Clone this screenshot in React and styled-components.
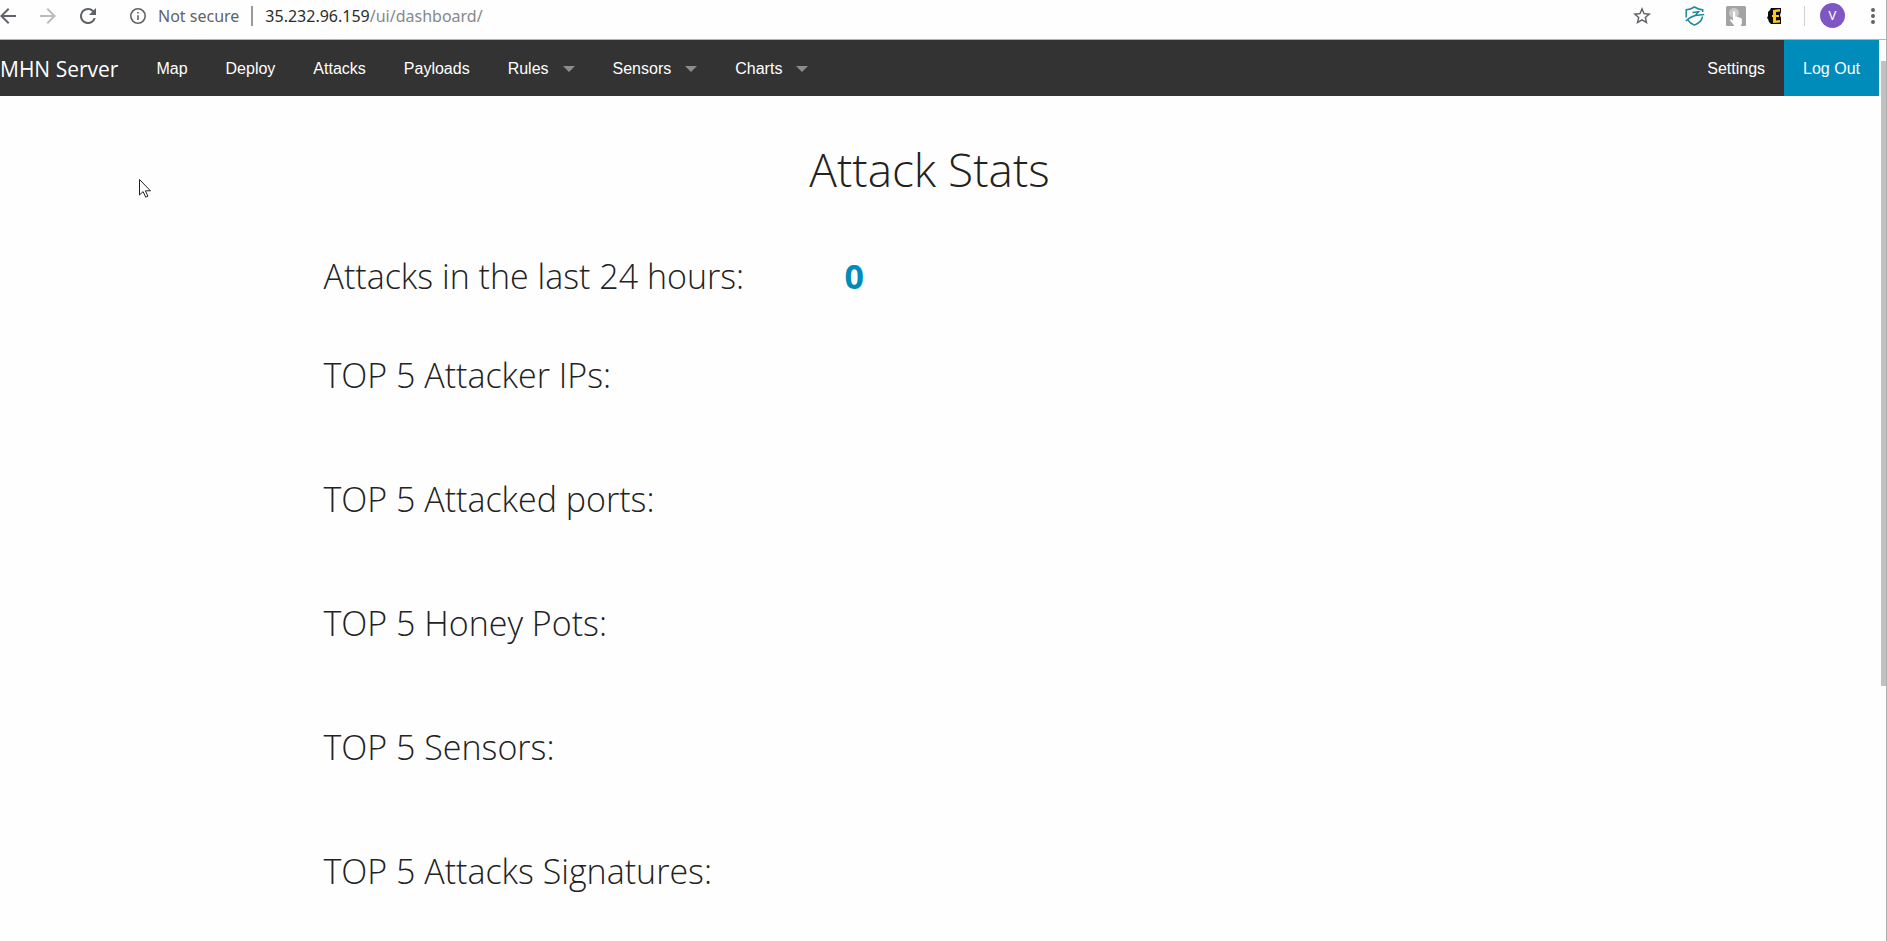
import React from "react";
import styled, { createGlobalStyle } from "styled-components";

const GlobalStyle = createGlobalStyle`
  * { box-sizing: border-box; }
  body {
    margin: 0;
    background: #fefefe;
    color: #222;
    font-family: "Open Sans", "Liberation Sans", sans-serif;
  }
`;

const Page = styled.div`
  min-height: 100vh;
  display: flex;
  flex-direction: column;
  border-right: 1px solid #b0b0b0;
  position: relative;
`;

const BrowserBar = styled.header`
  height: 40px;
  padding-bottom: 8px;
  display: flex;
  align-items: center;
  justify-content: space-between;
  border-bottom: 1px solid #b4b4b4;
  color: #5f6368;
`;

const BarGroup = styled.div`
  display: flex;
  align-items: center;
  gap: ${(p) => p.$gap}px;
`;

const IconButton = styled.button`
  display: flex;
  padding: 0;
  border: 0;
  background: none;
  color: ${(p) => (p.$muted ? "#b9bbbd" : "#5f6368")};
`;

const Address = styled.div`
  display: flex;
  align-items: center;
  gap: 12px;
  padding-left: 10px;
  font-family: "Noto Sans", "Open Sans", sans-serif;
  font-size: 16px;
  line-height: 24px;
`;

const Divider = styled.span`
  width: ${(p) => p.$width}px;
  height: 20px;
  background: ${(p) => p.$color};
`;

const Url = styled.span`
  color: #85888b;
`;

const Host = styled.span`
  color: #2b2c2f;
`;

const BarEnd = styled(BarGroup)`
  padding-right: 5px;
`;

const Extensions = styled(BarGroup)`
  padding: 0 7px 0 19px;
`;

const Avatar = styled.button`
  width: 25px;
  height: 25px;
  padding: 0;
  border: 0;
  border-radius: 50%;
  background: #7e57c2;
  color: #fff;
  font-family: Roboto, sans-serif;
  font-size: 13px;
  line-height: 25px;
  text-align: center;
`;

const KebabButton = styled(IconButton)`
  margin-left: 5px;
`;

const Viewport = styled.div`
  flex: 1;
  display: flex;
`;

const Site = styled.div`
  flex: 1;
  min-width: 0;
`;

const NavBar = styled.nav`
  height: 56px;
  display: flex;
  background: #333;
`;

const Brand = styled.a`
  padding-right: 19px;
  color: #fff;
  font-size: 21px;
  line-height: 58px;
  text-decoration: none;
  white-space: nowrap;
`;

const NavList = styled.ul`
  display: flex;
  margin: 0;
  margin-left: ${(p) => (p.$end ? "auto" : 0)};
  padding: 0;
  list-style: none;
`;

const NavLink = styled.a`
  display: flex;
  align-items: center;
  gap: 14px;
  height: 56px;
  padding: 2px 19px 0;
  background: ${(p) => (p.$primary ? "#008cba" : "transparent")};
  color: #fff;
  font-family: "Liberation Sans", Arial, sans-serif;
  font-size: 16px;
  text-decoration: none;
  white-space: nowrap;
`;

const Caret = styled.span`
  border: 6px solid transparent;
  border-top-color: #8c8c8c;
  border-bottom: 0;
`;

const Content = styled.main`
  max-width: 1232px;
  margin: 0 auto;
  padding: 41px 20px 20px 0;
`;

const Title = styled.h1`
  margin: 0 0 51px;
  font-size: 46px;
  font-weight: 300;
  line-height: 64px;
  text-align: center;
`;

const StatRow = styled.section`
  display: grid;
  grid-template-columns: 5fr 7fr;
  padding-bottom: ${(p) => (p.$compact ? 51 : 76)}px;

  &:last-child {
    padding-bottom: 0;
  }
`;

const StatLabel = styled.h3`
  margin: 0;
  font-size: 34px;
  font-weight: 300;
  line-height: 48px;
  white-space: nowrap;
`;

const StatValue = styled.strong`
  padding-left: 16px;
  color: #008cba;
  font-size: 34px;
  font-weight: 700;
  line-height: 48px;
`;

const ScrollTrack = styled.div`
  width: 7px;
  padding: 21px 0 0 2px;
  display: flex;
  flex-direction: column;
`;

const ScrollThumb = styled.div`
  flex: 0 0 71%;
  background: #c1c1c1;
`;

const Pointer = styled.svg`
  position: absolute;
  left: 138px;
  top: 178px;
`;

const Icon = ({ size = 16, box = "4 4 16 16", children }) => (
  <svg width={size} height={size} viewBox={box} fill="currentColor" aria-hidden="true">
    {children}
  </svg>
);

const ShieldIcon = () => (
  <svg width="20" height="20" viewBox="0 0 20 20" fill="none" stroke="#1b87a3" strokeWidth="1.5" aria-hidden="true">
    <path d="M1.200 11.500V3.800C4.600 3.600 7 2.500 9.500 1c2.500 1.500 5 2.600 8.200 2.800V6" />
    <path d="M17.600 10.500c-.8 4-3.600 6.800-8.100 8.600-3-1.200-5.200-2.800-6.600-5" />
    <path d="M.8 15c3-3 6-4.800 9.600-5.600l8.800-.8M7.500 6.600l6-.8-3.200 3.600" strokeWidth="1.500" />
  </svg>
);

const TouchIcon = () => (
  <svg width="20" height="20" viewBox="0 0 20 20" aria-hidden="true">
    <rect width="20" height="20" rx="1.500" fill="#a3a3a3" />
    <circle cx="8" cy="7" r="5" fill="#c9c9c9" />
    <path d="M7 6.500c0-1.600 2.300-1.600 2.300 0V11c.7-.7 2-.5 2.200.3.700-.5 1.900-.3 2.100.6.900-.3 2.300.1 2.300 1.500V17l-1 3H8.600L4.300 14.800c-.8-1.300.6-2.200 1.500-1.300L7 14.600z" fill="#fff" />
  </svg>
);

const BadgeIcon = () => (
  <svg width="15" height="18" viewBox="0 0 15 18" aria-hidden="true">
    <path d="M4 1h10v4l-1 3 1 3v6H4L2 15l-1-3-1-1 1-2V5l2-2z" fill="#0b0a08" />
    <path d="M6 3l7-1v2.500l-4 .5v3h3v2H9v3.500l4-.5v2.500l-7 .5v-6H5v-2h1z" fill="#f8c81c" />
  </svg>
);

const navItems = [
  { label: "Map" },
  { label: "Deploy" },
  { label: "Attacks" },
  { label: "Payloads" },
  { label: "Rules", menu: true },
  { label: "Sensors", menu: true },
  { label: "Charts", menu: true },
];

const stats = [
  { label: "Attacks in the last 24 hours:", value: "0" },
  { label: "TOP 5 Attacker IPs:" },
  { label: "TOP 5 Attacked ports:" },
  { label: "TOP 5 Honey Pots:" },
  { label: "TOP 5 Sensors:" },
  { label: "TOP 5 Attacks Signatures:" },
];

export default function App() {
  return (
    <Page>
      <GlobalStyle />
      <BrowserBar>
        <BarGroup $gap={24}>
          <IconButton aria-label="Back">
            <Icon><path d="M20 11H7.830l5.590-5.590L12 4l-8 8 8 8 1.410-1.410L7.830 13H20v-2z" /></Icon>
          </IconButton>
          <IconButton aria-label="Forward" $muted>
            <Icon><path d="M12 4l-1.410 1.410L16.170 11H4v2h12.170l-5.580 5.590L12 20l8-8z" /></Icon>
          </IconButton>
          <IconButton aria-label="Reload">
            <Icon><path d="M17.650 6.350A7.960 7.960 0 0 0 12 4a8 8 0 1 0 7.730 10h-2.080A6 6 0 1 1 12 6c1.660 0 3.140.69 4.220 1.780L13 11h7V4l-2.350 2.350z" /></Icon>
          </IconButton>
          <Address>
            <Icon box="2 2 20 20"><path d="M11 7h2v2h-2zm0 4h2v6h-2zm1-9a10 10 0 1 0 0 20 10 10 0 0 0 0-20zm0 18a8 8 0 1 1 0-16 8 8 0 0 1 0 16z" /></Icon>
            <span>Not secure</span>
            <Divider $width={2} $color="#98999b" />
            <Url><Host>35.232.96.159</Host>/ui/dashboard/</Url>
          </Address>
        </BarGroup>
        <BarEnd $gap={15}>
          <IconButton aria-label="Bookmark this page">
            <Icon size={18} box="2 2 20 20"><path d="M22 9.240l-7.190-.62L12 2 9.190 8.630 2 9.240l5.460 4.730L5.820 21 12 17.270 18.180 21l-1.630-7.030L22 9.240zM12 15.400l-3.760 2.270 1-4.280-3.320-2.880 4.380-.38L12 6.100l1.710 4.040 4.380.38-3.320 2.880 1 4.280L12 15.400z" /></Icon>
          </IconButton>
          <Extensions $gap={21}>
            <IconButton aria-label="Shield extension"><ShieldIcon /></IconButton>
            <IconButton aria-label="Touch extension"><TouchIcon /></IconButton>
            <IconButton aria-label="Badge extension"><BadgeIcon /></IconButton>
          </Extensions>
          <Divider $width={1} $color="#cfd0d2" />
          <Avatar>V</Avatar>
          <KebabButton aria-label="Menu">
            <Icon><path d="M12 8a2 2 0 1 0 0-4 2 2 0 0 0 0 4zm0 2a2 2 0 1 0 0 4 2 2 0 0 0 0-4zm0 6a2 2 0 1 0 0 4 2 2 0 0 0 0-4z" /></Icon>
          </KebabButton>
        </BarEnd>
      </BrowserBar>
      <Viewport>
        <Site>
          <NavBar>
            <Brand href="#">MHN Server</Brand>
            <NavList>
              {navItems.map((item) => (
                <li key={item.label}>
                  <NavLink href="#">
                    {item.label}
                    {item.menu && <Caret />}
                  </NavLink>
                </li>
              ))}
            </NavList>
            <NavList $end>
              <li><NavLink href="#">Settings</NavLink></li>
              <li><NavLink href="#" $primary>Log Out</NavLink></li>
            </NavList>
          </NavBar>
          <Content>
            <Title>Attack Stats</Title>
            {stats.map((stat) => (
              <StatRow key={stat.label} $compact={Boolean(stat.value)}>
                <StatLabel>{stat.label}</StatLabel>
                {stat.value && <StatValue>{stat.value}</StatValue>}
              </StatRow>
            ))}
          </Content>
        </Site>
        <ScrollTrack>
          <ScrollThumb />
        </ScrollTrack>
      </Viewport>
      <Pointer width="14" height="22" viewBox="0 0 14 22" aria-hidden="true">
        <path d="M1.500 1.500v15.500l3.600-3.400 2.600 5.600 2.200-1-2.500-5.400h5z" fill="#fff" stroke="#222" strokeWidth="1" />
      </Pointer>
    </Page>
  );
}
